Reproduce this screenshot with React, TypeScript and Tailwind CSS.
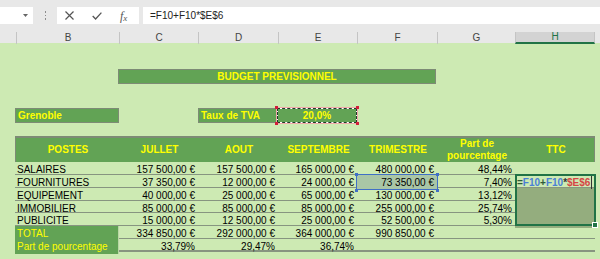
import React from "react";

const FONT = "font-['Liberation_Sans',Arial,sans-serif]";

const data: string[][] = [
  ["SALAIRES", "157 500,00 €", "157 500,00 €", "165 000,00 €", "480 000,00 €", "48,44%"],
  ["FOURNITURES", "37 350,00 €", "12 000,00 €", "24 000,00 €", "73 350,00 €", "7,40%"],
  ["EQUIPEMENT", "40 000,00 €", "25 000,00 €", "65 000,00 €", "130 000,00 €", "13,12%"],
  ["IMMOBILIER", "85 000,00 €", "85 000,00 €", "85 000,00 €", "255 000,00 €", "25,74%"],
  ["PUBLICITE", "15 000,00 €", "12 500,00 €", "25 000,00 €", "52 500,00 €", "5,30%"],
];

const heights = ["h-[13px]", "h-[13px]", "h-[13px]", "h-[12px]", "h-[13px]", "h-[13px]", "h-[13px]"];

const TCOLS = "grid grid-cols-[104px_79px_80px_79px_80px_78px_80px]";

function Num({ v }: { v: string }) {
  return <div className="flex items-center justify-end pr-[3px] whitespace-nowrap">{v}</div>;
}

export default function App() {
  return (
    <div className={`w-[600px] h-[259px] overflow-hidden flex flex-col ${FONT} bg-[#cdeab3]`}>
      {/* formula bar */}
      <div className="h-[32px] shrink-0 bg-[#e8e8e8] flex pt-[7px]">
        <div className="w-[33px] h-[17px] bg-white flex items-center justify-end pr-[5px]">
          <svg width="5" height="3" viewBox="0 0 5 3">
            <polygon points="0,0 5,0 2.5,3" fill="#666" />
          </svg>
        </div>
        <div className="w-[24px] h-[17px] flex flex-col items-center justify-center gap-[2px]">
          <span className="block w-px h-[1.5px] bg-[#8c8c8c]" />
          <span className="block w-px h-[1.5px] bg-[#8c8c8c]" />
          <span className="block w-px h-[1.5px] bg-[#8c8c8c]" />
        </div>
        <div className="w-[82px] h-[17px] bg-white flex items-center">
          <svg className="ml-[8px]" width="9" height="9" viewBox="0 0 9 9">
            <path d="M0.5 0.5 L8.5 8.5 M8.5 0.5 L0.5 8.5" stroke="#555" strokeWidth="1.2" fill="none" />
          </svg>
          <svg className="ml-[18px]" width="10" height="8" viewBox="0 0 10 8">
            <path d="M0.7 4 L3.6 7 L9.4 0.6" stroke="#555" strokeWidth="1.3" fill="none" />
          </svg>
          <span className="ml-[18px] font-['Liberation_Serif',serif] italic text-[12px] leading-none text-[#555]">
            f<span className="text-[9px] relative top-[1px]">x</span>
          </span>
        </div>
        <div className="ml-[4px] flex-1 h-[17px] bg-white pl-[7px] text-[10px] leading-[17px] text-[#222]">
          =F10+F10*$E$6
        </div>
      </div>

      {/* column headers */}
      <div className="h-[11px] shrink-0 bg-[#e8e8e8] grid grid-cols-[16px_103px_79px_80px_79px_80px_78px_80px_1fr] text-[10px] leading-[11px] text-[#444]">
        <div />
        {["B", "C", "D", "E", "F", "G"].map((c) => (
          <div key={c} className="border-l border-[#c4c4c4] text-center">
            {c}
          </div>
        ))}
        <div className="border-x border-[#c4c4c4] bg-[#d3d3d3] text-[#217346] text-center border-b-2 border-b-[#217346] leading-[10px]">
          H
        </div>
        <div />
      </div>

      {/* sheet */}
      <div className="flex-1 text-[10px] text-black">
        {/* title */}
        <div className="mt-[26px] ml-[118px] w-[318px] h-[15px] bg-[#62a355] border border-[#7d8b75] text-[#ffff00] font-bold flex items-center justify-center leading-none">
          BUDGET PREVISIONNEL
        </div>

        {/* Grenoble / TVA */}
        <div className="mt-[24px] h-[15px] flex">
          <div className="ml-[15px] w-[104px] bg-[#62a355] border border-[#7d8b75] text-[#ffff00] font-bold flex items-center pl-[2px]">
            Grenoble
          </div>
          <div className="ml-[79px] w-[79px] bg-[#62a355] border border-[#7d8b75] text-[#ffff00] font-bold flex items-center pl-[2px]">
            Taux de TVA
          </div>
          <div className="relative w-[80px] bg-white outline outline-1 outline-[#f0a8a8]">
            <div className="absolute inset-[1px] bg-[#62a355] flex items-center justify-center text-[#ffff00] font-bold">
              20,0%
            </div>
            <div className="absolute inset-0 border border-dashed border-[#1c3d29]" />
            <span className="absolute -left-[2px] -top-[2px] w-[3px] h-[3px] bg-[#d11e3a]" />
            <span className="absolute -right-[2px] -top-[2px] w-[3px] h-[3px] bg-[#d11e3a]" />
            <span className="absolute -left-[2px] -bottom-[2px] w-[3px] h-[3px] bg-[#d11e3a]" />
            <span className="absolute -right-[2px] -bottom-[2px] w-[3px] h-[3px] bg-[#d11e3a]" />
          </div>
        </div>

        {/* table */}
        <div className="mt-[13px] ml-[15px] w-[580px]">
          <div className={`${TCOLS} h-[26px] bg-[#62a355] border-t-2 border-x border-[#7d8b75] text-[#ffff00] font-bold leading-[12px]`}>
            {["POSTES", "JULLET", "AOUT", "SEPTEMBRE", "TRIMESTRE"].map((h) => (
              <div key={h} className="flex items-center justify-center">
                {h}
              </div>
            ))}
            <div className="flex flex-col items-center justify-center text-center">
              <span>Part de</span>
              <span>pourcentage</span>
            </div>
            <div className="flex items-center justify-center">TTC</div>
          </div>

          <div className="relative">
            {data.map((r, i) => (
              <div key={r[0]} className={`${TCOLS} ${heights[i]} border-b border-[#879580]`}>
                <div className="flex items-center pl-[2px]">{r[0]}</div>
                <Num v={r[1]} />
                <Num v={r[2]} />
                <Num v={r[3]} />
                {i === 1 ? (
                  <div className="relative bg-[#a9c6a6]">
                    <div className="absolute inset-0 flex items-center justify-end pr-[3px]">{r[4]}</div>
                    <div className="absolute -left-[1px] -top-[1px] -right-[1px] bottom-0 border border-[#3f6fc6]" />
                    <span className="absolute -left-[2px] -top-[2px] w-[3px] h-[3px] bg-[#3f6fc6]" />
                    <span className="absolute -right-[2px] -top-[2px] w-[3px] h-[3px] bg-[#3f6fc6]" />
                    <span className="absolute -left-[2px] -bottom-[2px] w-[3px] h-[3px] bg-[#3f6fc6]" />
                    <span className="absolute -right-[2px] -bottom-[2px] w-[3px] h-[3px] bg-[#3f6fc6]" />
                  </div>
                ) : (
                  <Num v={r[4]} />
                )}
                <Num v={r[5]} />
                {i === 1 ? (
                  <div className="relative flex items-center pl-[2px] font-bold whitespace-nowrap">
                    <span className="text-[#2f5a3a]">=</span>
                    <span className="text-[#4a7fd6]">F10</span>
                    <span className="text-[#2f5a3a]">+</span>
                    <span className="text-[#4a7fd6]">F10</span>
                    <span className="text-[#333]">*</span>
                    <span className="text-[#d64545]">$E$6</span>
                    <span className="absolute right-[3px] top-[1px] bottom-[1px] w-px bg-[#333]" />
                  </div>
                ) : i >= 2 ? (
                  <div className="bg-[#94ad7e]" />
                ) : (
                  <div />
                )}
              </div>
            ))}

            <div className={`${TCOLS} ${heights[5]} border-b border-[#879580]`}>
              <div className="flex items-center pl-[2px] bg-[#62a355] text-[#ffff00] border-r border-[#b9d6a5]">TOTAL</div>
              <Num v="334 850,00 €" />
              <Num v="292 000,00 €" />
              <Num v="364 000,00 €" />
              <Num v="990 850,00 €" />
              <div />
              <div />
            </div>
            <div className={`${TCOLS} ${heights[6]} border-b-2 border-[#879580]`}>
              <div className="flex items-center pl-[2px] bg-[#62a355] text-[#ffff00] border-r border-[#b9d6a5] whitespace-nowrap">
                Part de pourcentage
              </div>
              <Num v="33,79%" />
              <Num v="29,47%" />
              <Num v="36,74%" />
              <div />
              <div />
              <div />
            </div>

            {/* H selection overlay */}
            <div className="absolute left-[500px] top-[12px] w-[81px] h-[52px] border-2 border-[#217346]">
              <span className="absolute -right-[3px] -bottom-[3px] w-[4px] h-[4px] bg-[#217346] outline outline-1 outline-white" />
            </div>
          </div>
        </div>
      </div>
    </div>
  );
}
